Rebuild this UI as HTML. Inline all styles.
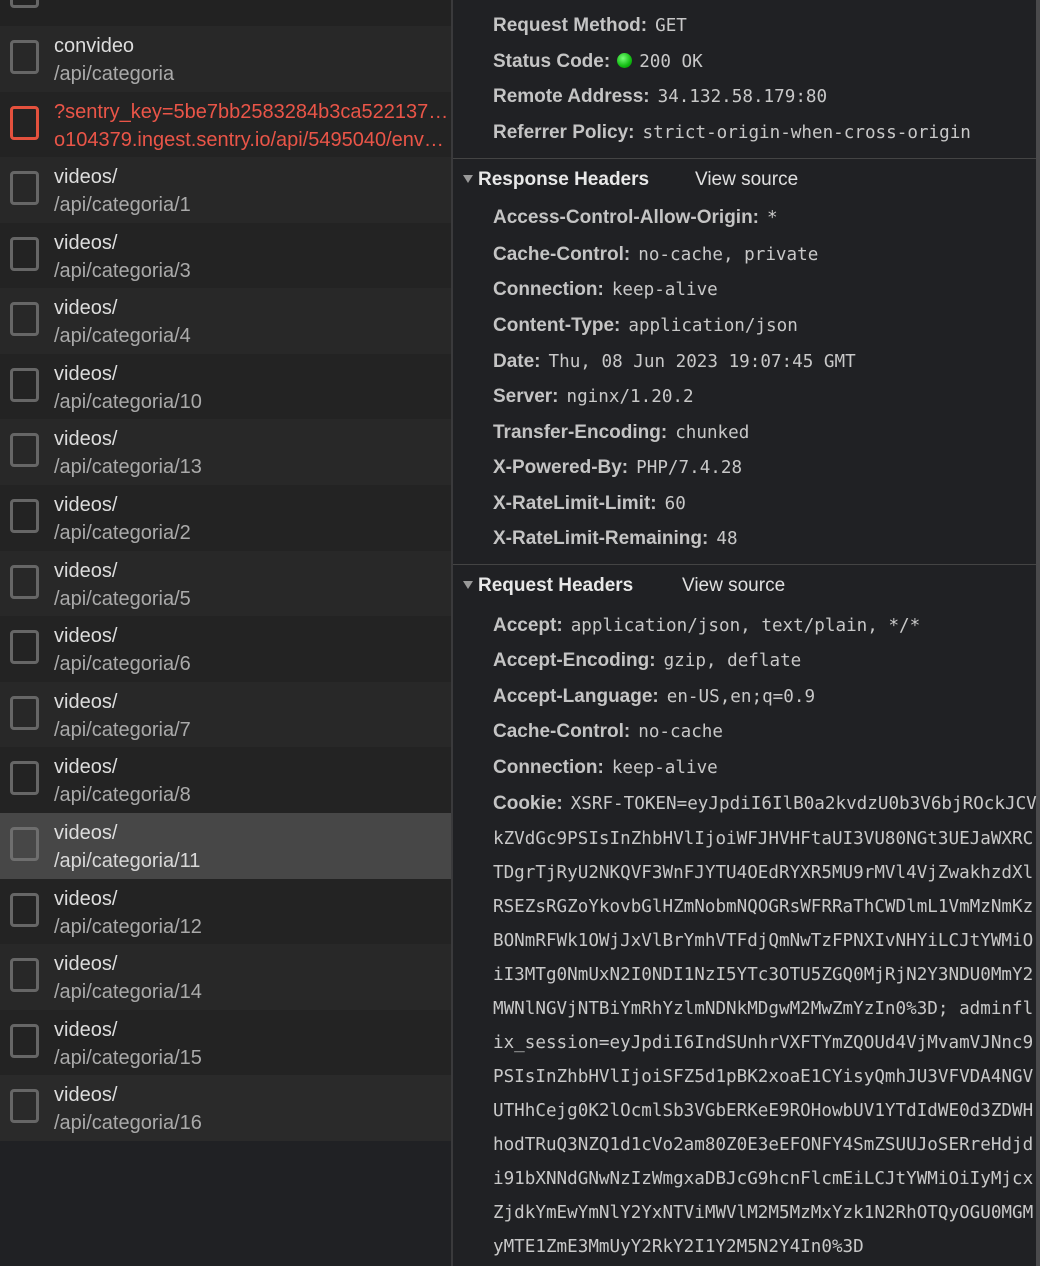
<!DOCTYPE html>
<html><head><meta charset="utf-8"><style>
*{margin:0;padding:0;box-sizing:border-box}
body{width:1040px;height:1266px;background:#202124;overflow:hidden;position:relative;font-family:"Liberation Sans",sans-serif}
#left{position:absolute;left:0;top:0;width:451px;height:1266px;background:#202124}
.row{position:absolute;left:0;width:451px;height:66px}
.row .cb{position:absolute;left:10px;top:14px;width:29px;height:34px;border:3px solid #666;border-radius:4px}
.row .n{position:absolute;left:54px;top:9px;font-size:20px;color:#ddd;white-space:nowrap}
.row .p{position:absolute;left:54px;top:37px;font-size:20px;color:#aaa;white-space:nowrap}
.red .cb{border-color:#e4513d}
.red .n,.red .p{color:#ea5548}
#div{position:absolute;left:451px;top:0;width:2px;height:1266px;background:#3a3a3c}
#sb{position:absolute;left:1036px;top:0;width:4px;height:1266px;background:#4a4a4c}
.l{position:absolute;left:493px;white-space:nowrap;font-size:18.7px;color:#c8c8c8}
.l b{font-family:"Liberation Sans",sans-serif;font-weight:bold;color:#c4c4c4;font-size:19px;margin-right:8px}
.l span{font-family:"DejaVu Sans Mono",monospace;font-size:17.6px}
.c{position:absolute;left:493px;white-space:nowrap;font-family:"DejaVu Sans Mono",monospace;font-size:17.6px;color:#c8c8c8}
.h{position:absolute;left:463px;font-weight:bold;font-size:19px;color:#e8e8e8;white-space:nowrap}
.h i{display:inline-block;width:0;height:0;border-left:5px solid transparent;border-right:5px solid transparent;border-top:8px solid #999;margin-right:5px;vertical-align:2px}
.vs{position:absolute;font-size:19px;color:#e0e0e0}
.sep{position:absolute;left:453px;width:583px;height:1px;background:#444}
</style></head><body>
<div id="left">
<div class="row" style="top:-40px;background:#222"><div class="cb"></div></div>
<div class="row" style="top:26px;background:#282828"><div class="cb"></div><div class="n">convideo</div><div class="p">/api/categoria</div></div>
<div class="row red" style="top:92px;background:#232323"><div class="cb"></div><div class="n">?sentry_key=5be7bb2583284b3ca522137…</div><div class="p" style="color:#ea5548">o104379.ingest.sentry.io/api/5495040/env…</div></div>
<div class="row" style="top:157px;background:#282828"><div class="cb"></div><div class="n">videos/</div><div class="p">/api/categoria/1</div></div>
<div class="row" style="top:223px;background:#232323"><div class="cb"></div><div class="n">videos/</div><div class="p">/api/categoria/3</div></div>
<div class="row" style="top:288px;background:#282828"><div class="cb"></div><div class="n">videos/</div><div class="p">/api/categoria/4</div></div>
<div class="row" style="top:354px;background:#232323"><div class="cb"></div><div class="n">videos/</div><div class="p">/api/categoria/10</div></div>
<div class="row" style="top:419px;background:#282828"><div class="cb"></div><div class="n">videos/</div><div class="p">/api/categoria/13</div></div>
<div class="row" style="top:485px;background:#232323"><div class="cb"></div><div class="n">videos/</div><div class="p">/api/categoria/2</div></div>
<div class="row" style="top:551px;background:#282828"><div class="cb"></div><div class="n">videos/</div><div class="p">/api/categoria/5</div></div>
<div class="row" style="top:616px;background:#232323"><div class="cb"></div><div class="n">videos/</div><div class="p">/api/categoria/6</div></div>
<div class="row" style="top:682px;background:#282828"><div class="cb"></div><div class="n">videos/</div><div class="p">/api/categoria/7</div></div>
<div class="row" style="top:747px;background:#232323"><div class="cb"></div><div class="n">videos/</div><div class="p">/api/categoria/8</div></div>
<div class="row" style="top:813px;background:#474747"><div class="cb" style="border-color:#6e6e6e"></div><div class="n">videos/</div><div class="p" style="color:#d8d8d8">/api/categoria/11</div></div>
<div class="row" style="top:879px;background:#232323"><div class="cb"></div><div class="n">videos/</div><div class="p">/api/categoria/12</div></div>
<div class="row" style="top:944px;background:#282828"><div class="cb"></div><div class="n">videos/</div><div class="p">/api/categoria/14</div></div>
<div class="row" style="top:1010px;background:#232323"><div class="cb"></div><div class="n">videos/</div><div class="p">/api/categoria/15</div></div>
<div class="row" style="top:1075px;background:#2a2a2a"><div class="cb"></div><div class="n">videos/</div><div class="p">/api/categoria/16</div></div>
</div>
<div id="div"></div>
<div id="sb"></div>

<div class="l" style="top:14px"><b>Request Method:</b><span>GET</span></div>
<div class="l" style="top:50px"><b>Status Code:</b><i style="display:inline-block;width:15px;height:15px;border-radius:50%;background:radial-gradient(circle at 40% 35%,#7f7,#1b1 60%,#080);vertical-align:-1px;margin-right:7px;margin-left:-1px"></i><span>200 OK</span></div>
<div class="l" style="top:85px"><b>Remote Address:</b><span>34.132.58.179:80</span></div>
<div class="l" style="top:121px"><b>Referrer Policy:</b><span>strict-origin-when-cross-origin</span></div>
<div class="sep" style="top:158px"></div>
<div class="h" style="top:169px"><i></i>Response Headers</div>
<div class="vs" style="top:169px;left:695px">View source</div>
<div class="l" style="top:206px"><b>Access-Control-Allow-Origin:</b><span>*</span></div>
<div class="l" style="top:243px"><b>Cache-Control:</b><span>no-cache, private</span></div>
<div class="l" style="top:278px"><b>Connection:</b><span>keep-alive</span></div>
<div class="l" style="top:314px"><b>Content-Type:</b><span>application/json</span></div>
<div class="l" style="top:350px"><b>Date:</b><span>Thu, 08 Jun 2023 19:07:45 GMT</span></div>
<div class="l" style="top:385px"><b>Server:</b><span>nginx/1.20.2</span></div>
<div class="l" style="top:421px"><b>Transfer-Encoding:</b><span>chunked</span></div>
<div class="l" style="top:456px"><b>X-Powered-By:</b><span>PHP/7.4.28</span></div>
<div class="l" style="top:492px"><b>X-RateLimit-Limit:</b><span>60</span></div>
<div class="l" style="top:527px"><b>X-RateLimit-Remaining:</b><span>48</span></div>
<div class="sep" style="top:564px"></div>
<div class="h" style="top:575px"><i></i>Request Headers</div>
<div class="vs" style="top:575px;left:682px">View source</div>
<div class="l" style="top:614px"><b>Accept:</b><span>application/json, text/plain, */*</span></div>
<div class="l" style="top:649px"><b>Accept-Encoding:</b><span>gzip, deflate</span></div>
<div class="l" style="top:685px"><b>Accept-Language:</b><span>en-US,en;q=0.9</span></div>
<div class="l" style="top:720px"><b>Cache-Control:</b><span>no-cache</span></div>
<div class="l" style="top:756px"><b>Connection:</b><span>keep-alive</span></div>
<div class="l" style="top:792px"><b>Cookie:</b><span>XSRF-TOKEN=eyJpdiI6IlB0a2kvdzU0b3V6bjROckJCV</span></div>
<div class="c" style="top:829px">kZVdGc9PSIsInZhbHVlIjoiWFJHVHFtaUI3VU80NGt3UEJaWXRC</div>
<div class="c" style="top:863px">TDgrTjRyU2NKQVF3WnFJYTU4OEdRYXR5MU9rMVl4VjZwakhzdXl</div>
<div class="c" style="top:897px">RSEZsRGZoYkovbGlHZmNobmNQOGRsWFRRaThCWDlmL1VmMzNmKz</div>
<div class="c" style="top:931px">BONmRFWk1OWjJxVlBrYmhVTFdjQmNwTzFPNXIvNHYiLCJtYWMiO</div>
<div class="c" style="top:965px">iI3MTg0NmUxN2I0NDI1NzI5YTc3OTU5ZGQ0MjRjN2Y3NDU0MmY2</div>
<div class="c" style="top:999px">MWNlNGVjNTBiYmRhYzlmNDNkMDgwM2MwZmYzIn0%3D; adminfl</div>
<div class="c" style="top:1033px">ix_session=eyJpdiI6IndSUnhrVXFTYmZQOUd4VjMvamVJNnc9</div>
<div class="c" style="top:1067px">PSIsInZhbHVlIjoiSFZ5d1pBK2xoaE1CYisyQmhJU3VFVDA4NGV</div>
<div class="c" style="top:1101px">UTHhCejg0K2lOcmlSb3VGbERKeE9ROHowbUV1YTdIdWE0d3ZDWH</div>
<div class="c" style="top:1135px">hodTRuQ3NZQ1d1cVo2am80Z0E3eEFONFY4SmZSUUJoSERreHdjd</div>
<div class="c" style="top:1169px">i91bXNNdGNwNzIzWmgxaDBJcG9hcnFlcmEiLCJtYWMiOiIyMjcx</div>
<div class="c" style="top:1203px">ZjdkYmEwYmNlY2YxNTViMWVlM2M5MzMxYzk1N2RhOTQyOGU0MGM</div>
<div class="c" style="top:1237px">yMTE1ZmE3MmUyY2RkY2I1Y2M5N2Y4In0%3D</div>
</body></html>
